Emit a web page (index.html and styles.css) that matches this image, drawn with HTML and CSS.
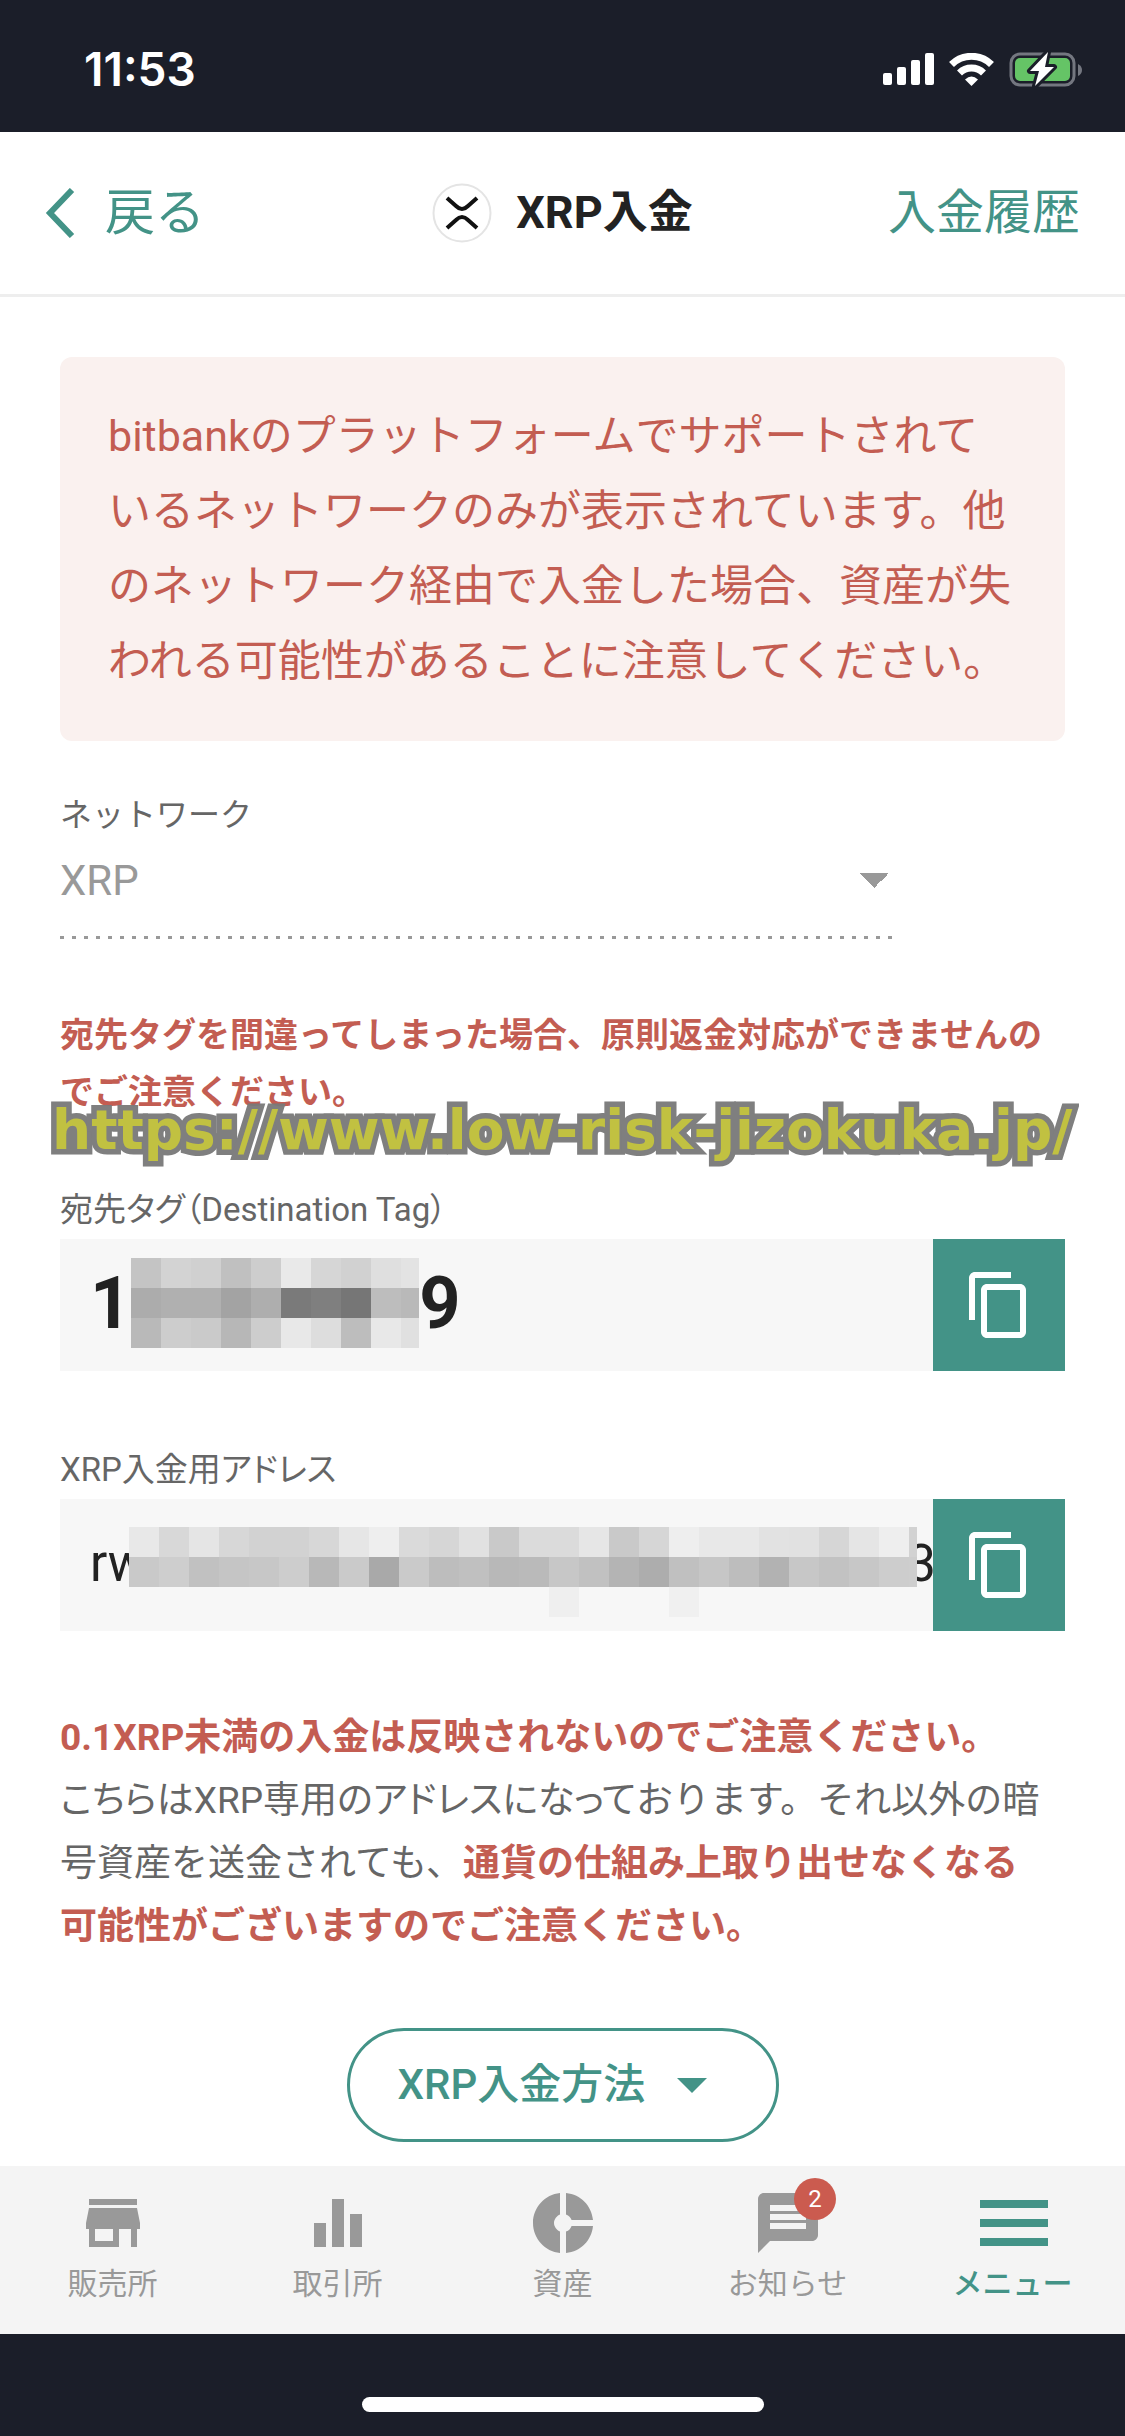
FILE: index.html
```html
<!DOCTYPE html>
<html lang="ja">
<head>
  <meta charset="UTF-8">
  <meta name="viewport" content="width=device-width, initial-scale=1.0">
  <title>XRP入金</title>
  <link rel="stylesheet" href="styles.css">
</head>
<body>
  <div class="status-bar">
    <div class="clock">11:53</div>
    <div class="status-icons">
      <svg width="51" height="32" viewBox="0 0 51 32" fill="#fff">
        <rect x="0" y="20" width="9" height="12" rx="2"/>
        <rect x="14" y="14" width="9" height="18" rx="2"/>
        <rect x="28" y="7" width="9" height="25" rx="2"/>
        <rect x="42" y="0" width="9" height="32" rx="2"/>
      </svg>
      <svg width="45" height="33" viewBox="0 0 45 33" fill="none" stroke="#fff" stroke-width="7">
        <path d="M2.500 11.500A28.500 28.500 0 0 1 42.500 11.500"/>
        <path d="M10.500 20A17 17 0 0 1 34.500 20"/>
        <path d="M16 26.500Q22.500 20.500 29 26.500L22.500 33Z" fill="#fff" stroke="none"/>
      </svg>
      <svg width="74" height="38" viewBox="0 0 74 38">
        <rect x="2" y="4" width="63" height="31" rx="9" fill="none" stroke="#747780" stroke-width="3"/>
        <rect x="6" y="8" width="55" height="23" rx="5" fill="#65c466"/>
        <path d="M69 14q4 2 4 6t-4 6z" fill="#747780"/>
        <path d="M39 2L21 21h9l-4 15 19-19h-9z" fill="#fff" stroke="#1b1e29" stroke-width="6" stroke-linejoin="round" paint-order="stroke"/>
      </svg>
    </div>
  </div>

  <header class="header">
    <a class="header-link back" href="#">
      <svg width="30" height="50" viewBox="0 0 30 50" fill="none" stroke="#439387" stroke-width="6"><path d="M27 2L5 25l22 23"/></svg>
      <span>戻る</span>
    </a>
    <h1 class="title">
      <svg width="60" height="60" viewBox="0 0 60 60" fill="none">
        <circle cx="30" cy="30" r="28.500" fill="#fff" stroke="#e4e4e4" stroke-width="2"/>
        <path d="M15 15l9 8q6 6 12 0l9-8M15 45l9-8q6-6 12 0l9 8" stroke="#111" stroke-width="4"/>
      </svg>
      <span>XRP入金</span>
    </h1>
    <a class="header-link right" href="#">入金履歴</a>
  </header>

  <main class="content">
    <div class="alert">bitbankのプラットフォームでサポートされているネットワークのみが表示されています。他のネットワーク経由で入金した場合、資産が失われる可能性があることに注意してください。</div>

    <div class="network">
      <label class="label network-label" for="network">ネットワーク</label>
      <select class="network-select" id="network" disabled>
        <option>XRP</option>
      </select>
    </div>

    <p class="tag-warning">宛先タグを間違ってしまった場合、原則返金対応ができませんのでご注意ください。</p>
    <div class="watermark-row"><span class="watermark">https://www.low-risk-jizokuka.jp/</span></div>

    <section class="field">
      <h2 class="label">宛先タグ（Destination Tag）</h2>
      <div class="field-row">
        <div class="value tag"><span>1</span><span class="mosaic" id="tagMosaic"></span><span>9</span></div>
        <button class="copy" type="button" aria-label="コピー">
          <svg width="72" height="72" viewBox="0 0 24 24" fill="#fff"><path d="M16 1H4c-1.100 0-2 .9-2 2v14h2V3h12V1zm3 4H8c-1.100 0-2 .9-2 2v14c0 1.100.9 2 2 2h11c1.100 0 2-.9 2-2V7c0-1.100-.9-2-2-2zm0 16H8V7h11v14z"/></svg>
        </button>
      </div>
    </section>

    <section class="field">
      <h2 class="label">XRP入金用アドレス</h2>
      <div class="field-row">
        <div class="value address"><span class="address-start">rw</span><span class="mosaic" id="addressMosaic"></span><span class="address-end">3</span></div>
        <button class="copy" type="button" aria-label="コピー">
          <svg width="72" height="72" viewBox="0 0 24 24" fill="#fff"><path d="M16 1H4c-1.100 0-2 .9-2 2v14h2V3h12V1zm3 4H8c-1.100 0-2 .9-2 2v14c0 1.100.9 2 2 2h11c1.100 0 2-.9 2-2V7c0-1.100-.9-2-2-2zm0 16H8V7h11v14z"/></svg>
        </button>
      </div>
    </section>

    <p class="notes"><strong>0.1XRP未満の入金は反映されないのでご注意ください。</strong><br><span class="tight">こちらはXRP専用のアドレスになって</span>おります。それ以外の暗号資産を送金されても、<strong>通貨の仕組み上取り出せなくなる<br>可能性がございますのでご注意ください。</strong></p>

    <button class="how-to" type="button">XRP入金方法
      <svg width="30" height="15" viewBox="0 0 30 15" fill="#439387"><path d="M0 0h30L15 15z"/></svg>
    </button>
  </main>

  <nav class="tabs">
    <a class="tab" href="#">
      <svg width="72" height="72" viewBox="0 0 24 24"><path d="M20 4H4v2h16V4zm1 10v-2l-1-5H4l-1 5v2h1v6h10v-6h4v6h2v-6h1zm-9 4H6v-4h6v4z"/></svg>
      <span>販売所</span>
    </a>
    <a class="tab" href="#">
      <svg width="72" height="72" viewBox="0 0 24 24"><path d="M10 20h4V4h-4v16zm-6 0h4v-8H4v8zM16 9v11h4V9h-4z"/></svg>
      <span>取引所</span>
    </a>
    <a class="tab" href="#">
      <svg width="72" height="72" viewBox="0 0 24 24"><path d="M11 9.160V2c-5 .5-9 4.790-9 10s4 9.500 9 10v-7.160c-1-.41-2-1.520-2-2.840s1-2.430 2-2.840zM14.860 11H22c-.48-4.750-4-8.530-9-9v7.160c1 .3 1.520.98 1.860 1.840zM13 14.840V22c5-.47 8.520-4.250 9-9h-7.140c-.34.86-.86 1.540-1.860 1.840z"/></svg>
      <span>資産</span>
    </a>
    <a class="tab" href="#">
      <svg width="72" height="72" viewBox="0 0 24 24"><path d="M20 2H4c-1.100 0-1.990.9-1.990 2L2 22l4-4h14c1.100 0 2-.9 2-2V4c0-1.100-.9-2-2-2zm-2 12H6v-2h12v2zm0-3H6V9h12v2zm0-3H6V6h12v2z"/></svg>
      <span>お知らせ</span>
      <span class="badge">2</span>
    </a>
    <a class="tab active" href="#">
      <svg width="72" height="72" viewBox="0 0 72 72"><path d="M3 13h68v8H3zM3 32h68v8H3zM3 51h68v8H3z"/></svg>
      <span>メニュー</span>
    </a>
  </nav>
  <div class="home-area"><div class="home-indicator"></div></div>

  <script>
    // grey level of every mosaic cell, row by row
    const tagRows = [
      "c4 d3 d0 c0 cd e9 d6 d1 df e3",
      "ac b0 b0 a3 ae 7a 7f 76 bd b9",
      "b9 cd ca b7 cd e8 dd bd e8 e0"
    ];
    const addressRows = [
      "e8 d8 e5 d7 d2 d2 d7 e6 ee da d6 e1 c9 db db e6 c9 d6 ee e8 e8 e2 e1 d6 e5 ee d2",
      "c9 ce c1 c5 c7 cd b8 ca a9 ca bd c0 b8 ba c7 c1 b4 ad c0 c6 bd b2 c7 c2 c7 cd ce",
      "f7 f7 f7 f7 f7 f7 f7 f7 f7 f7 f7 f7 f7 f7 ef f7 f7 f7 f0 f7 f7 f7 f7 f7 f7 f7 f7"
    ];

    function drawMosaic(id, rows) {
      const mosaic = document.getElementById(id);
      rows.join(" ").split(" ").forEach((level) => {
        const cell = document.createElement("i");
        cell.style.backgroundColor = `#${level}${level}${level}`;
        mosaic.appendChild(cell);
      });
    }

    drawMosaic("tagMosaic", tagRows);
    drawMosaic("addressMosaic", addressRows);
  </script>
</body>
</html>
```
FILE: styles.css
```css
* {
  box-sizing: border-box;
}

body {
  margin: 0;
  min-height: 100vh;
  display: flex;
  flex-direction: column;
  font-family: Roboto, "Noto Sans CJK JP", sans-serif;
  color: #222;
  background-color: #fff;
}

svg {
  display: block;
  flex-shrink: 0;
}

a {
  text-decoration: none;
}

button {
  font-family: inherit;
  cursor: pointer;
}

.status-bar {
  height: 132px;
  padding: 6px 42px 0 84px;
  display: flex;
  align-items: center;
  justify-content: space-between;
  background-color: #1b1e29;
}

.clock {
  font-family: Inter, sans-serif;
  font-size: 46px;
  font-weight: 600;
  color: #fff;
}

.status-icons {
  display: flex;
  align-items: center;
  gap: 15px;
}

.header {
  height: 165px;
  padding: 0 45px;
  display: grid;
  grid-template-columns: 1fr auto 1fr;
  align-items: center;
  line-height: 60px;
  border-bottom: 3px solid #eee;
}

.header-link {
  display: flex;
  align-items: center;
  gap: 30px;
  font-size: 48px;
  color: #439387;
}

.back {
  font-size: 50px;
}

.right {
  justify-content: flex-end;
}

.title {
  margin: 0;
  display: flex;
  align-items: center;
  gap: 24px;
  font-size: 45px;
  font-weight: 700;
}

.content {
  flex: 1;
  padding: 60px 60px 24px;
}

.alert {
  padding: 42px 48px;
  font-size: 43px;
  line-height: 75px;
  color: #c35d52;
  background-color: #faf1ef;
  border-radius: 12px;
}

.label {
  display: block;
  margin: 0;
  font-size: 33px;
  font-weight: 400;
  line-height: 48px;
  color: #666;
  font-feature-settings: "palt";
}

.network {
  width: 83%;
  margin-top: 50px;
}

.network-label {
  font-size: 32px;
  font-feature-settings: normal;
}

.network-select {
  display: block;
  width: 100%;
  height: 100px;
  padding: 0 0 18px;
  font-family: inherit;
  font-size: 42px;
  color: #999;
  opacity: 1;
  border: none;
  border-radius: 0;
  appearance: none;
  background-color: transparent;
  background-image: conic-gradient(from -45deg at 50% 100%, #999 90deg, transparent 0), repeating-linear-gradient(to right, #999 0 4px, transparent 4px 12px);
  background-size: 30px 15px, 100% 3px;
  background-position: right 5px top 34px, left bottom;
  background-repeat: no-repeat;
}

.tag-warning {
  margin: 68px 0 0;
  font-size: 34px;
  font-weight: 700;
  line-height: 57px;
  color: #c35d52;
}

/* site address laid over the warning text */
.watermark-row {
  position: relative;
  height: 65px;
}

.watermark {
  position: absolute;
  left: -8px;
  top: -24px;
  font-family: "DejaVu Sans", sans-serif;
  font-size: 55px;
  font-weight: 700;
  line-height: 66px;
  white-space: nowrap;
  color: #bfbf3a;
  -webkit-text-stroke: 11px #7a7a7a;
  paint-order: stroke fill;
  stroke-linejoin: round;
  opacity: 0.96;
}

.field {
  margin-bottom: 75px;
}

.field-row {
  display: flex;
  margin-top: 5px;
  background-color: #f7f7f7;
}

.value {
  flex: 1;
  min-width: 0;
  height: 132px;
  padding: 0 0 4px 30px;
  display: flex;
  align-items: center;
  overflow: hidden;
}

.tag {
  font-size: 72px;
  font-weight: 700;
}

.address {
  font-size: 51px;
}

.mosaic {
  display: grid;
  grid-auto-rows: 30px;
  flex-shrink: 0;
}

#tagMosaic {
  width: 288px;
  grid-template-columns: repeat(9, 30px) 18px;
}

#addressMosaic {
  width: 788px;
  margin-top: 18px;
  grid-template-columns: repeat(26, 30px) 8px;
}

.address-start {
  width: 39px;
  flex-shrink: 0;
  overflow: hidden;
}

/* only the right part of the last character shows */
.address-end {
  width: 19px;
  flex-shrink: 0;
  display: flex;
  justify-content: flex-end;
  overflow: hidden;
}

.copy {
  width: 132px;
  padding: 0;
  display: flex;
  align-items: center;
  justify-content: center;
  border: none;
  background-color: #439387;
}

.notes {
  margin: 0;
  font-size: 37px;
  line-height: 63px;
  color: #666;
}

.notes strong {
  color: #c35d52;
}

.tight {
  font-feature-settings: "palt";
}

.how-to {
  width: 432px;
  height: 114px;
  margin: 70px auto 0;
  padding: 0 0 0 48px;
  display: flex;
  align-items: center;
  gap: 32px;
  font-size: 42px;
  font-weight: 500;
  line-height: 60px;
  color: #439387;
  background-color: #fff;
  border: 3px solid #439387;
  border-radius: 57px;
}

.tabs {
  height: 168px;
  display: grid;
  grid-template-columns: repeat(5, 1fr);
  background-color: #f4f4f4;
}

.tab {
  position: relative;
  padding-top: 21px;
  display: flex;
  flex-direction: column;
  align-items: center;
  font-size: 30px;
  line-height: 50px;
  color: #999;
  fill: #999;
}

.active {
  font-weight: 500;
  color: #439387;
  fill: #439387;
}

.badge {
  position: absolute;
  top: 12px;
  left: 119px;
  width: 42px;
  height: 42px;
  font-size: 24px;
  line-height: 42px;
  text-align: center;
  color: #fff;
  background-color: #cb5b4f;
  border-radius: 50%;
}

.home-area {
  height: 102px;
  padding-top: 63px;
  background-color: #1b1e29;
}

.home-indicator {
  width: 402px;
  height: 15px;
  margin: 0 auto;
  background-color: #fff;
  border-radius: 8px;
}
```
